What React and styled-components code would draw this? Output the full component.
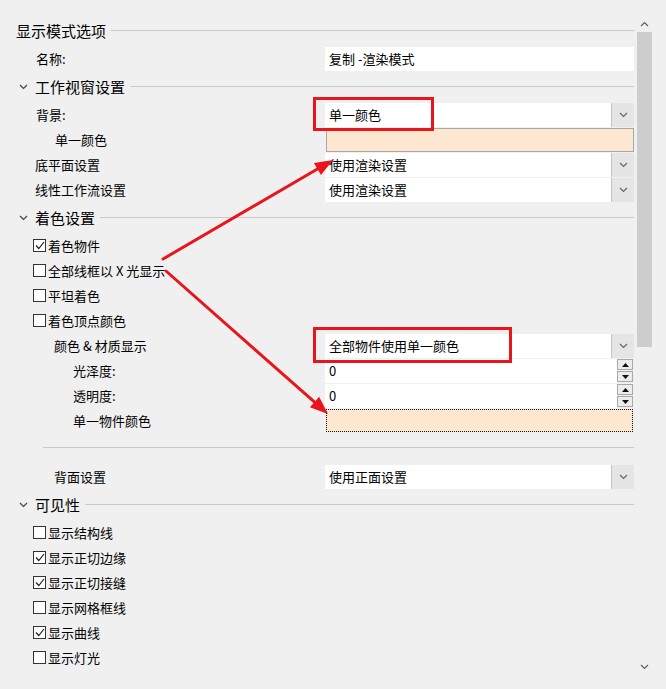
import React from "react";
import styled, { createGlobalStyle } from "styled-components";

const GlobalStyle = createGlobalStyle`
  body {
    margin: 0;
    background: #f0f0f0;
  }
`;

const RED = "#e8161c";
const SWATCH = "#fde7d0";

const Window = styled.div`
  position: relative;
  width: 666px;
  height: 689px;
  display: flex;
  background: #f0f0f0;
  font-family: "Noto Sans CJK SC", "Noto Sans", sans-serif;
  font-size: 13px;
  color: #000;
  overflow: hidden;
`;

const Content = styled.div`
  width: 634px;
  padding-top: 15px;
  display: flex;
  flex-direction: column;
`;

const Header = styled.div`
  height: 31px;
  display: flex;
  align-items: center;
  padding-left: ${(p) => (p.$collapsible ? "19px" : "16px")};
  font-size: 15px;
  white-space: nowrap;
`;

const HeaderLine = styled.div`
  flex: 1;
  height: 1px;
  margin-left: 5px;
  background: #c9c9c9;
`;

const Row = styled.div`
  height: 25px;
  display: grid;
  grid-template-columns: 325px 309px;
  align-items: center;
`;

const Label = styled.div`
  display: flex;
  align-items: center;
  padding-left: ${(p) => p.$indent}px;
  padding-bottom: 1px;
  white-space: nowrap;
`;

const Box = styled.span`
  width: 11px;
  height: 11px;
  border: 1px solid #333;
  background: #fff;
  margin-right: 2px;
  display: flex;
  align-items: center;
  justify-content: center;
`;

const Field = styled.div`
  height: 24px;
  background: #fff;
  display: flex;
  align-items: center;
`;

const Value = styled.div`
  flex: 1;
  padding-left: 4px;
  padding-bottom: 1px;
  white-space: nowrap;
`;

const DropButton = styled.div`
  width: 22px;
  height: 24px;
  background: #e5e5e5;
  border-left: 1px solid #c4c4c4;
  display: flex;
  align-items: center;
  justify-content: center;
`;

const SpinBox = styled.div`
  width: 16px;
  height: 24px;
  display: flex;
  flex-direction: column;
  justify-content: center;
  gap: 1px;
  background: #f0f0f0;
  padding-right: 1px;
`;

const SpinPart = styled.div`
  height: 9px;
  border: 1px solid #a9a9a9;
  background: #ececec;
  display: flex;
  align-items: center;
  justify-content: center;
`;

const Swatch = styled.div`
  height: ${(p) => (p.$focused ? "21px" : "22px")};
  margin-left: 1px;
  margin-right: ${(p) => (p.$focused ? "1px" : "0")};
  background: ${SWATCH};
  border: 1px ${(p) => (p.$focused ? "dotted #111" : "solid #a9a9a9")};
`;

const Separator = styled.div`
  height: 31px;
  padding-left: 43px;
  display: flex;
  flex-direction: column;

  &::before {
    content: "";
    margin-top: 14px;
    height: 1px;
    background: #c9c9c9;
  }
`;

const ScrollBar = styled.div`
  margin-left: 2px;
  margin-top: 16px;
  width: 17px;
  height: 659px;
  display: flex;
  flex-direction: column;
`;

const ScrollButton = styled.div`
  height: 16px;
  display: flex;
  align-items: center;
  justify-content: center;
`;

const Thumb = styled.div`
  height: 315px;
  margin: 0 1px;
  background: #cdcdcd;
`;

const Track = styled.div`
  flex: 1;
`;

const Callout = styled.div`
  position: absolute;
  left: ${(p) => p.$x}px;
  top: ${(p) => p.$y}px;
  width: ${(p) => p.$w}px;
  height: ${(p) => p.$h}px;
  box-sizing: border-box;
  border: 3px solid ${RED};
  pointer-events: none;
`;

const Overlay = styled.svg`
  position: absolute;
  left: 0;
  top: 0;
  pointer-events: none;
`;

const Chevron = ({ up, color = "#555", w = 9 }) => (
  <svg width={w} height="6" viewBox="0 0 9 6">
    <polyline
      points={up ? "1,5 4.5,1.5 8,5" : "1,1 4.5,4.5 8,1"}
      fill="none"
      stroke={color}
      strokeWidth="1.2"
    />
  </svg>
);

const Tri = ({ up }) => (
  <svg width="7" height="4" viewBox="0 0 7 4">
    <polygon points={up ? "0,4 3.5,0 7,4" : "0,0 3.5,4 7,0"} fill="#111" />
  </svg>
);

const Check = ({ checked, children }) => (
  <Label $indent={33}>
    <Box>
      {checked && (
        <svg width="10" height="9" viewBox="0 0 10 9">
          <polyline points="1,4.5 3.8,7.5 9,1" fill="none" stroke="#222" strokeWidth="1.2" />
        </svg>
      )}
    </Box>
    {children}
  </Label>
);

const Section = ({ title, collapsible = true }) => (
  <Header $collapsible={collapsible}>
    {collapsible && (
      <span style={{ marginRight: 7, display: "flex" }}>
        <Chevron color="#444" />
      </span>
    )}
    {title}
    <HeaderLine />
  </Header>
);

const Dropdown = ({ value }) => (
  <Field>
    <Value>{value}</Value>
    <DropButton>
      <Chevron w={9} color="#666" />
    </DropButton>
  </Field>
);

const Spinner = ({ value }) => (
  <Field>
    <Value>{value}</Value>
    <SpinBox>
      <SpinPart>
        <Tri up />
      </SpinPart>
      <SpinPart>
        <Tri />
      </SpinPart>
    </SpinBox>
  </Field>
);

function arrow(x1, y1, x2, y2, len = 18, w = 14) {
  const a = Math.atan2(y2 - y1, x2 - x1);
  const bx = x2 - len * Math.cos(a);
  const by = y2 - len * Math.sin(a);
  const px = (-Math.sin(a) * w) / 2;
  const py = (Math.cos(a) * w) / 2;
  return {
    line: { x1, y1, x2: bx + Math.cos(a) * 2, y2: by + Math.sin(a) * 2 },
    head: `${x2},${y2} ${bx + px},${by + py} ${bx - px},${by - py}`,
  };
}

const arrows = [arrow(163, 259, 333, 160), arrow(166, 271, 328, 414)];

export default function App() {
  return (
    <Window>
      <GlobalStyle />
      <Content>
        <Section title="显示模式选项" collapsible={false} />
        <Row>
          <Label $indent={36}>名称:</Label>
          <Field>
            <Value>复制 -渲染模式</Value>
          </Field>
        </Row>

        <Section title="工作视窗设置" />
        <Row>
          <Label $indent={36}>背景:</Label>
          <Dropdown value="单一颜色" />
        </Row>
        <Row>
          <Label $indent={55}>单一颜色</Label>
          <Swatch />
        </Row>
        <Row>
          <Label $indent={35}>底平面设置</Label>
          <Dropdown value="使用渲染设置" />
        </Row>
        <Row>
          <Label $indent={35}>线性工作流设置</Label>
          <Dropdown value="使用渲染设置" />
        </Row>

        <Section title="着色设置" />
        <Row>
          <Check checked>着色物件</Check>
        </Row>
        <Row>
          <Check>全部线框以 X 光显示</Check>
        </Row>
        <Row>
          <Check>平坦着色</Check>
        </Row>
        <Row>
          <Check>着色顶点颜色</Check>
        </Row>
        <Row>
          <Label $indent={54}>颜色 &amp; 材质显示</Label>
          <Dropdown value="全部物件使用单一颜色" />
        </Row>
        <Row>
          <Label $indent={73}>光泽度:</Label>
          <Spinner value="0" />
        </Row>
        <Row>
          <Label $indent={73}>透明度:</Label>
          <Spinner value="0" />
        </Row>
        <Row>
          <Label $indent={73}>单一物件颜色</Label>
          <Swatch $focused />
        </Row>
        <Separator />
        <Row>
          <Label $indent={54}>背面设置</Label>
          <Dropdown value="使用正面设置" />
        </Row>

        <Section title="可见性" />
        <Row>
          <Check>显示结构线</Check>
        </Row>
        <Row>
          <Check checked>显示正切边缘</Check>
        </Row>
        <Row>
          <Check checked>显示正切接缝</Check>
        </Row>
        <Row>
          <Check>显示网格框线</Check>
        </Row>
        <Row>
          <Check checked>显示曲线</Check>
        </Row>
        <Row>
          <Check>显示灯光</Check>
        </Row>
      </Content>

      <ScrollBar>
        <ScrollButton>
          <Chevron up color="#606060" />
        </ScrollButton>
        <Thumb />
        <Track />
        <ScrollButton>
          <Chevron color="#606060" />
        </ScrollButton>
      </ScrollBar>

      <Callout $x={313} $y={97} $w={121} $h={34} />
      <Callout $x={313} $y={327} $w={199} $h={36} />
      <Overlay width="666" height="689">
        {arrows.map((a, i) => (
          <g key={i}>
            <line {...a.line} stroke={RED} strokeWidth="3" strokeLinecap="round" />
            <polygon points={a.head} fill={RED} />
          </g>
        ))}
      </Overlay>
    </Window>
  );
}
